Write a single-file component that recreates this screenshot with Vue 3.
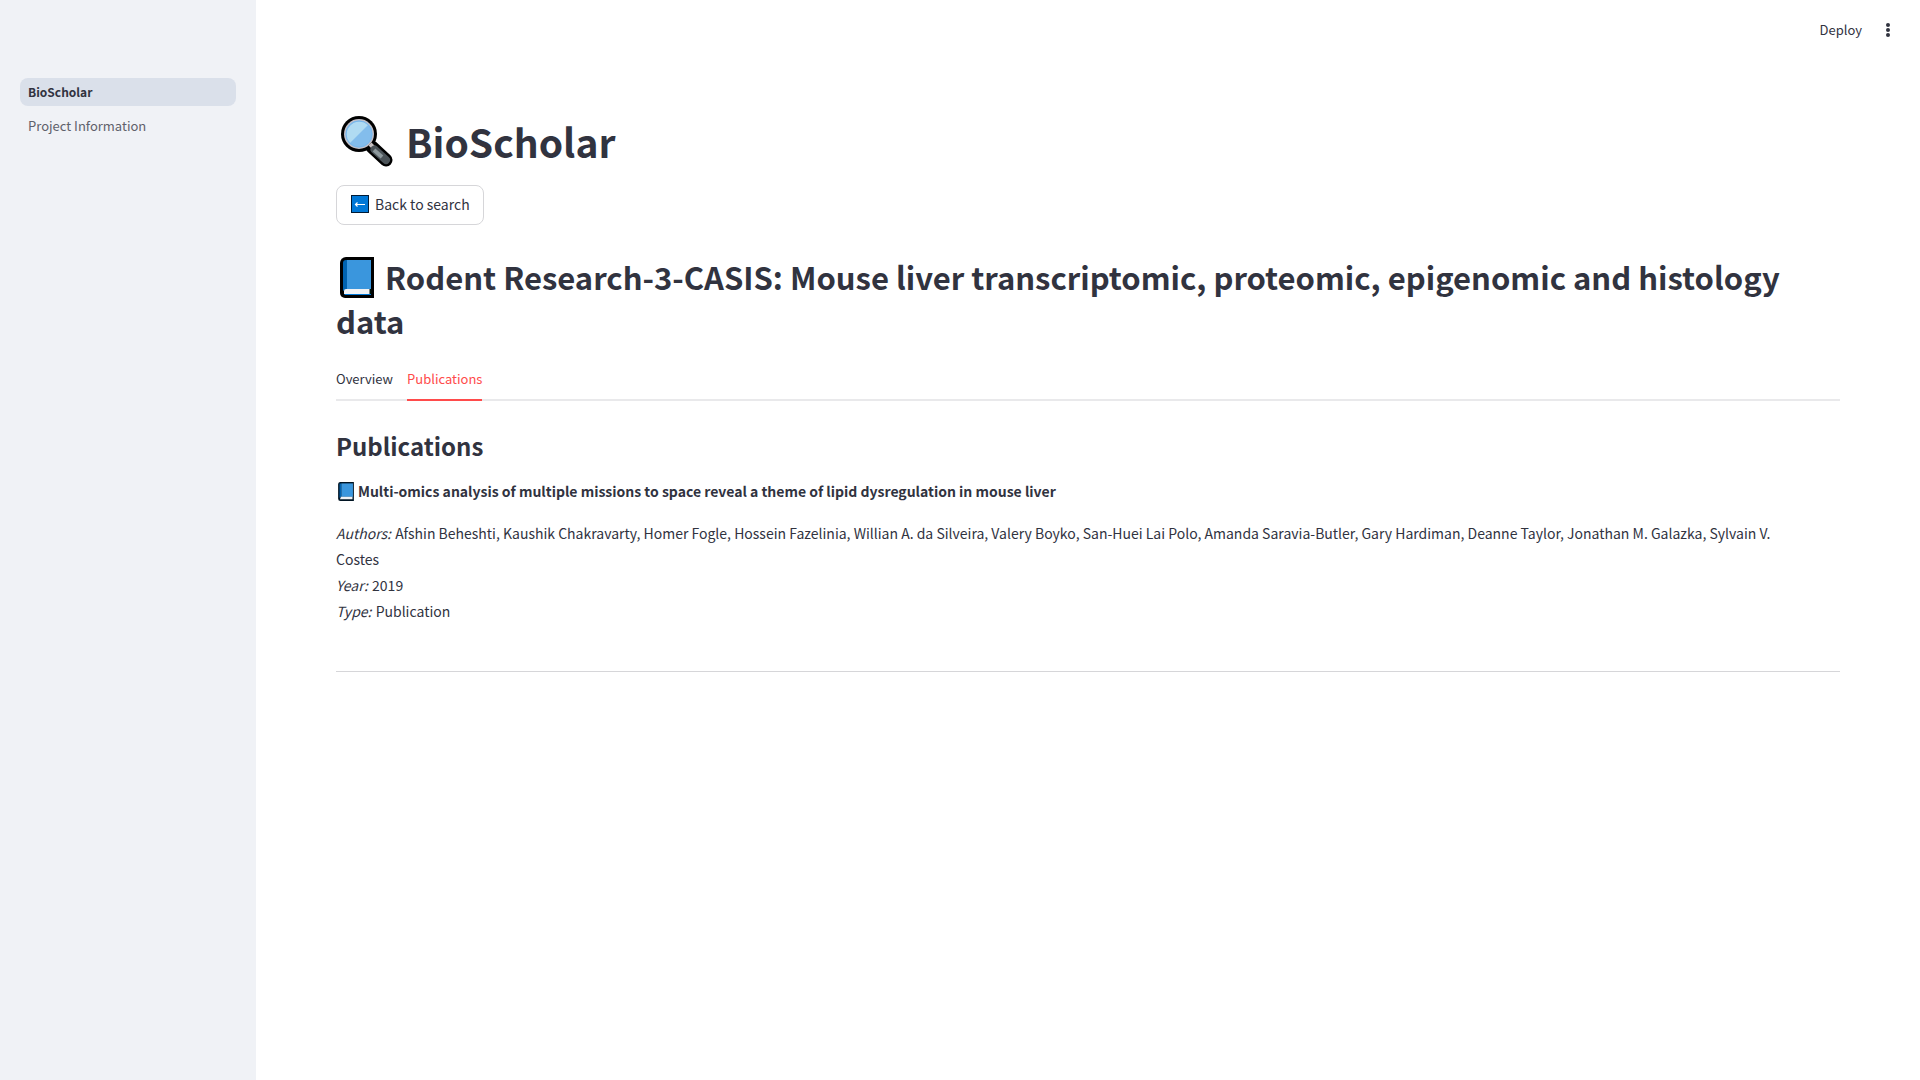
<script setup>
import { ref } from 'vue'

const pages = ['BioScholar', 'Project Information']
const tabs = ['Overview', 'Publications']
const activeTab = ref('Publications')

const details = [
  {
    label: 'Authors:',
    value:
      'Afshin Beheshti, Kaushik Chakravarty, Homer Fogle, Hossein Fazelinia, Willian A. da Silveira, Valery Boyko, San-Huei Lai Polo, Amanda Saravia-Butler, Gary Hardiman, Deanne Taylor, Jonathan M. Galazka, Sylvain V. Costes',
  },
  { label: 'Year:', value: '2019' },
  { label: 'Type:', value: 'Publication' },
]
</script>

<template>
  <div class="app">
    <aside class="sidebar">
      <nav class="nav">
        <a v-for="(page, i) in pages" :key="page" href="#" class="nav-link" :class="{ current: i === 0 }">{{ page }}</a>
      </nav>
    </aside>

    <div class="main">
      <header class="toolbar">
        <button type="button" class="deploy">Deploy</button>
        <button type="button" class="menu" aria-label="Main menu">
          <svg width="4" height="14" viewBox="0 0 4 14" fill="#31333f">
            <circle cx="2" cy="2" r="2" /><circle cx="2" cy="7" r="2" /><circle cx="2" cy="12" r="2" />
          </svg>
        </button>
      </header>

      <main class="content">
        <h1 class="title">
          <svg class="glass" viewBox="0 0 52 52" aria-hidden="true">
            <path d="M31 31 L45 44" stroke="#000" stroke-width="13" stroke-linecap="round" />
            <circle cx="18" cy="18" r="18" fill="#000" />
            <path d="M29 28 L33 32" stroke="#c9c2c2" stroke-width="4" />
            <path d="M33.500 33.500 L45 44" stroke="#4b5358" stroke-width="8" stroke-linecap="round" />
            <path d="M33 34 L41 41" stroke="#8d989c" stroke-width="4" />
            <circle cx="18" cy="18" r="15" fill="#c3c0c8" />
            <circle cx="18" cy="18" r="13.500" fill="#83bdec" />
            <path d="M8.500 27.500 A13.500 13.500 0 0 1 27.500 8.500 Z" fill="#b0dbf2" />
            <circle cx="18" cy="18" r="13" fill="none" stroke="#78b7ec" stroke-width="1" />
          </svg>
          <span>BioScholar</span>
        </h1>

        <button type="button" class="back">
          <svg width="18" height="18" viewBox="0 0 18 18" aria-hidden="true">
            <path fill="#001b36" d="M0 0h18v18H0z" />
            <path fill="#0078d7" d="M1 1h16v16H1z" />
            <path fill="none" stroke="#fff" stroke-width="1.200" d="M14 9.500H5M6.500 7.500 4.500 9.500 6.500 11.500" />
          </svg>
          <span>Back to search</span>
        </button>

        <h2 class="dataset">
          <svg class="book-large" viewBox="0 0 34 41" aria-hidden="true">
            <path fill="#000" d="M6 0h28v41H5a5 5 0 0 1-5-5V6a6 6 0 0 1 6-6z" />
            <path fill="#0063b1" d="M6 3h1v29l-4 2V6a3 3 0 0 1 3-3z" />
            <path fill="#3a96dd" d="M7 3h24v29H7z" />
            <path fill="#f0f2f5" d="M6 32h25v5H4v-3a2 2 0 0 1 2-2z" />
            <path fill="#0078d7" d="M4 37h27v1H5z" />
            <path d="M30.500 32v5" stroke="#00130a" stroke-width="2" />
          </svg>
          Rodent Research-3-CASIS: Mouse liver transcriptomic, proteomic, epigenomic and histology data
        </h2>

        <div class="tabs" role="tablist">
          <button
            v-for="tab in tabs"
            :key="tab"
            type="button"
            role="tab"
            class="tab"
            :class="{ active: tab === activeTab }"
            :aria-selected="tab === activeTab"
            @click="activeTab = tab"
          >
            {{ tab }}
          </button>
        </div>

        <section class="panel">
          <h3 class="section-title">Publications</h3>
          <p class="paper">
            <svg class="book-small" viewBox="0 0 34 41" aria-hidden="true">
              <path fill="#001423" d="M4 0h30v41H5a5 5 0 0 1-5-5V5a5 5 0 0 1 4-5z" />
              <path fill="#0063b1" d="M3 3h4v29l-4 2z" />
              <path fill="#3a96dd" d="M7 3h25v29H7z" />
              <path fill="#f0f2f5" d="M6 32h25v5H4z" />
            </svg>
            <strong>Multi-omics analysis of multiple missions to space reveal a theme of lipid dysregulation in mouse liver</strong>
          </p>
          <div class="details">
            <p v-for="item in details" :key="item.label"><em>{{ item.label }}</em> {{ item.value }}</p>
          </div>
          <hr class="rule" />
        </section>
      </main>
    </div>
  </div>
</template>

<style>
body {
  margin: 0;
  background: #fff;
}
</style>

<style scoped>
.app {
  display: flex;
  min-height: 100vh;
  color: #31333f;
  font: 400 14px/26px "Noto Sans CJK SC", "Noto Sans", sans-serif;
}
button {
  padding: 0;
  border: 0;
  background: none;
  color: inherit;
  font: inherit;
  cursor: pointer;
}
h1, h2, h3, p {
  margin: 0;
}
.sidebar {
  flex: 0 0 256px;
  background: #f0f2f6;
}
.nav {
  display: flex;
  flex-direction: column;
  gap: 6px;
  padding: 78px 20px 0;
}
.nav-link {
  padding: 0 8px;
  border-radius: 8px;
  color: #5f616b;
  font-size: 13px;
  line-height: 28px;
  text-decoration: none;
}
.nav-link.current {
  background: #dae0ea;
  color: #31333f;
  font-size: 12px;
  font-weight: 600;
}
.main {
  flex: 1;
  min-width: 0;
}
.toolbar {
  display: flex;
  align-items: center;
  justify-content: flex-end;
  gap: 24px;
  height: 60px;
  padding-right: 30px;
}
.deploy {
  font-size: 13px;
}
.menu {
  display: flex;
}
.content {
  padding: 54px 80px 0;
}
.title {
  display: flex;
  align-items: flex-end;
  gap: 13px;
  padding-left: 5px;
  font-size: 39px;
  font-weight: 700;
  line-height: 54px;
}
.glass {
  width: 52px;
  height: 52px;
}
.back {
  display: flex;
  align-items: center;
  gap: 6px;
  box-sizing: border-box;
  height: 40px;
  margin-top: 17px;
  padding: 0 13px 2px 14px;
  border: 1px solid #d6d6d9;
  border-radius: 8px;
}
.dataset {
  padding: 30px 0 18px;
  font-size: 31px;
  font-weight: 600;
  line-height: 44px;
}
.book-large {
  width: 34px;
  height: 41px;
  margin: 0 4px;
  vertical-align: -8px;
}
.tabs {
  display: flex;
  gap: 14px;
  box-sizing: border-box;
  height: 40px;
  border-bottom: 2px solid #e9e9eb;
}
.tab {
  height: 40px;
  box-sizing: border-box;
  padding-bottom: 2px;
  border-bottom: 2px solid transparent;
  font-size: 13px;
}
.tab.active {
  border-color: #ff4b4b;
  color: #ff4b4b;
}
.section-title {
  padding: 27px 0 14px;
  font-size: 24px;
  font-weight: 600;
  line-height: 36px;
}
.paper {
  margin-bottom: 16px;
}
.paper strong {
  font-weight: 600;
}
.book-small {
  width: 16px;
  height: 19px;
  margin: 0 4px 0 2px;
  vertical-align: -4px;
}
.details {
  padding-right: 32px;
}
.details em {
  margin-right: 1px;
}
.rule {
  height: 1px;
  margin: 47px 0 32px;
  border: 0;
  background: #d6d6d9;
}
</style>
